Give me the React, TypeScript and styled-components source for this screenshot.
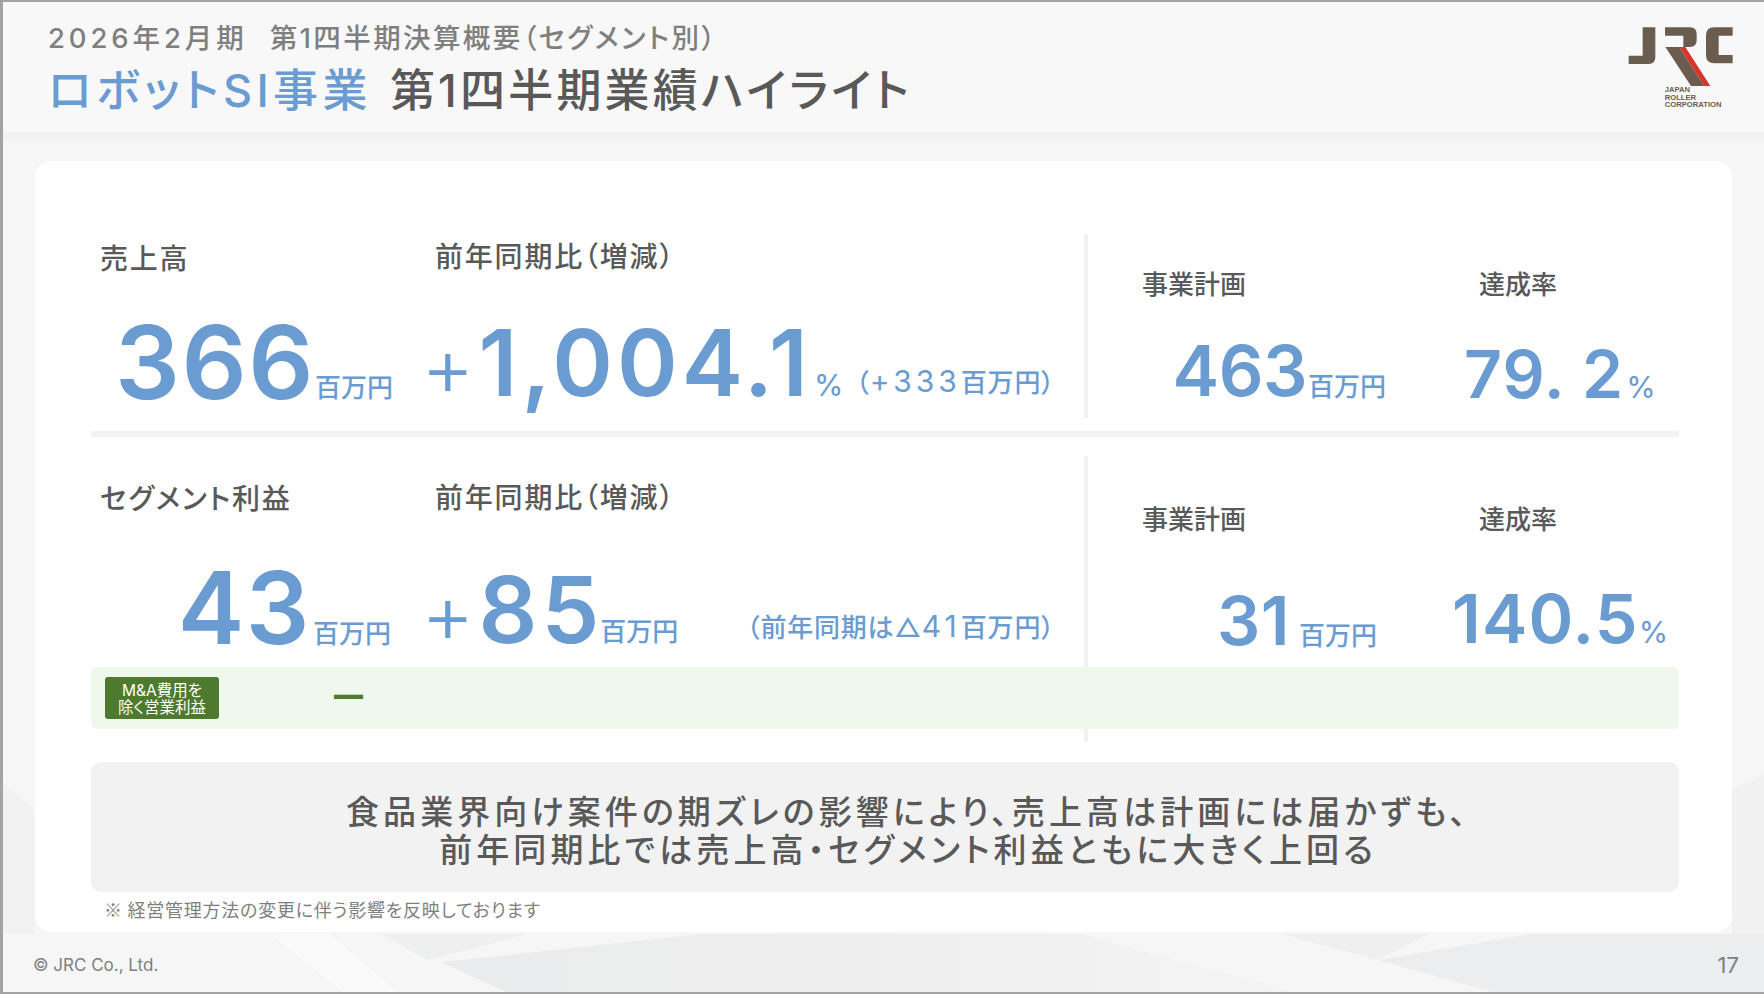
import React from 'react';
import styled, { createGlobalStyle } from 'styled-components';

const BLUE = '#6a9bd1';
const TEXT = '#595959';
const GRAY = '#7f7f7f';
const LINE = '#f2f2f2';
const FONT = 'Inter, "Noto Sans CJK JP", sans-serif';

const GlobalStyle = createGlobalStyle`
    html, body {
        margin: 0;
        padding: 0;
    }
    body {
        font-family: ${FONT};
        font-feature-settings: "palt";
    }
`;

const Page = styled.div`
    position: relative;
    box-sizing: border-box;
    width: 1764px;
    height: 994px;
    overflow: hidden;
    border-top: 2px solid #a3a3a3;
    border-left: 3px solid #a3a3a3;
    border-bottom: 2px solid #a3a3a3;
    display: flex;
    flex-direction: column;
    background-color: #f6f6f6;
`;

// the faint grey shards behind the slide
const Backdrop = styled.svg`
    position: absolute;
    left: -3px;
    top: -2px;
    width: 1764px;
    height: 994px;
`;

const Header = styled.header`
    position: relative;
    box-sizing: border-box;
    height: 138px;
    flex: none;
    padding: 18px 28px 0 45px;
    display: flex;
    justify-content: space-between;
    background: #f8f8f8;
    border-bottom: 8px solid ${LINE};
`;

const TitleBlock = styled.div`
    display: flex;
    flex-direction: column;
`;

const Subtitle = styled.div`
    font-size: 27.5px;
    line-height: 36px;
    font-weight: 500;
    color: ${GRAY};
    display: flex;
    gap: 22px;
    letter-spacing: 2.4px;
`;

const SubtitleYear = styled.span`
    letter-spacing: 3.9px;
`;

const Title = styled.h1`
    margin: 8px 0 0;
    font-size: 45px;
    line-height: 54px;
    font-weight: 500;
    color: ${TEXT};
    display: flex;
    gap: 18px;
    letter-spacing: 3.2px;
`;

const TitleAccent = styled.span`
    color: ${BLUE};
    letter-spacing: 4.4px;
`;

const Logo = styled.svg`
    width: 110px;
    height: 85px;
    margin-top: 5px;
    flex: none;
`;

const Card = styled.main`
    position: relative;
    box-sizing: border-box;
    width: 1697px;
    height: 771px;
    margin: 21px 0 0 32px;
    flex: none;
    padding: 73px 53px 0 56px;
    background: #fff;
    border-radius: 16px;
`;

const MetricGrid = styled.section<{ $rows: string }>`
    display: grid;
    grid-template-columns: 336px 657px 4px 390px 1fr;
    grid-template-rows: ${(p) => p.$rows};
`;

const Divider = styled.div`
    grid-column: 3;
    grid-row: 1 / -1;
    background: ${LINE};
`;

const Cell = styled.div<{ $col: number }>`
    grid-column: ${(p) => p.$col};
    grid-row: 1;
    display: flex;
    flex-direction: column;
    justify-content: space-between;
`;

const Label = styled.div<{ $top: number; $left: number; $small?: boolean }>`
    margin: ${(p) => p.$top}px 0 0 ${(p) => p.$left}px;
    font-size: ${(p) => (p.$small ? 26 : 28)}px;
    letter-spacing: ${(p) => (p.$small ? 0 : 1.8)}px;
    line-height: 36px;
    font-weight: 500;
    color: ${TEXT};
    white-space: nowrap;
`;

const ValueLine = styled.div<{ $bottom: number; $right?: number; $left?: number; $end?: boolean }>`
    display: flex;
    align-items: baseline;
    justify-content: ${(p) => (p.$end ? 'flex-end' : 'flex-start')};
    margin: 0 ${(p) => p.$right ?? 0}px ${(p) => p.$bottom}px ${(p) => p.$left ?? 0}px;
    color: ${BLUE};
    white-space: nowrap;
`;

const Big = styled.span<{ $size: number; $spacing?: number }>`
    font-size: ${(p) => p.$size}px;
    letter-spacing: ${(p) => p.$spacing ?? 0}px;
    line-height: 1;
    font-weight: 600;
`;

const Plus = styled.span`
    font-size: 82px;
    line-height: 1;
    font-weight: 300;
    margin: 0 4px 0 -6px;
`;

const Unit = styled.span<{ $left?: number; $lift?: number }>`
    font-size: 26px;
    line-height: 1;
    font-weight: 500;
    margin-left: ${(p) => p.$left ?? 4}px;
    transform: translateY(${(p) => -(p.$lift ?? 0)}px);
`;

const Percent = styled.span<{ $left?: number }>`
    font-size: 30px;
    line-height: 1;
    font-weight: 400;
    margin-left: ${(p) => p.$left ?? 2}px;
`;

const Aside = styled.span<{ $lift: number }>`
    margin: 0 29px 0 auto;
    font-size: 26px;
    line-height: 1;
    font-weight: 500;
    letter-spacing: 0.8px;
    transform: translateY(${(p) => -p.$lift}px);
`;

const AsideDigits = styled.span`
    font-size: 30px;
    letter-spacing: 4px;
    font-weight: 400;
`;

const RowRule = styled.hr`
    height: 6px;
    margin: 13px 0 19px;
    border: 0;
    background: ${LINE};
`;

const Band = styled.div`
    grid-column: 1 / -1;
    grid-row: 2;
    z-index: 1;
    display: flex;
    align-items: center;
    padding-left: 14px;
    background: #f0f7ec;
    border-radius: 6px;
`;

const Tag = styled.div`
    box-sizing: border-box;
    width: 114px;
    height: 42px;
    padding-top: 2px;
    display: flex;
    align-items: center;
    justify-content: center;
    text-align: center;
    font-size: 15.5px;
    line-height: 17px;
    color: #fff;
    background: #4e7a2f;
    border-radius: 3px;
`;

const Dash = styled.span`
    margin: -8px 0 0 115px;
    font-size: 29px;
    line-height: 1;
    font-weight: 900;
    color: #4e7a2f;
`;

const Summary = styled.div`
    box-sizing: border-box;
    height: 130px;
    margin-top: 20px;
    padding: 31px 0 0 46px;
    text-align: center;
    font-size: 33px;
    line-height: 38px;
    font-weight: 500;
    letter-spacing: 4.1px;
    color: ${TEXT};
    background: ${LINE};
    border-radius: 10px;
`;

const Note = styled.p`
    margin: 5px 0 0 13px;
    font-family: "Noto Sans CJK JP", sans-serif;
    font-size: 18px;
    letter-spacing: 0.75px;
    line-height: 24px;
    color: ${GRAY};
`;

const Footer = styled.footer`
    position: relative;
    flex: 1;
    display: flex;
    justify-content: space-between;
    align-items: center;
    padding: 6px 25px 0 30px;
    color: ${GRAY};
`;

const Copyright = styled.span`
    font-size: 17px;
`;

const PageNumber = styled.span`
    font-size: 22px;
`;

const App = () => (
    <>
        <GlobalStyle />
        <Page>
            <Backdrop viewBox="0 0 1764 994" aria-hidden="true">
                <defs>
                    <linearGradient id="shard" x1="0" x2="1" y1="0" y2="0">
                        <stop offset="0" stopColor="#eaebec" />
                        <stop offset="0.55" stopColor="#efefef" />
                        <stop offset="1" stopColor="#f4f4f4" />
                    </linearGradient>
                </defs>
                <polygon fill="#fafafa" points="270,934 330,934 400,994 345,994" />
                <polygon fill="#eeefef" points="382,934 528,934 427,960" />
                <polygon fill="url(#shard)" points="441,962 703,934 1080,934 1300,994 510,994" />
                <polygon fill="#efefef" points="1282,934 1428,934 1378,960" />
                <polygon fill="#ecedee" points="1378,960 1530,934 1764,934 1764,994 1500,994" />
                <polygon fill="#f1f1f1" points="1732,790 1764,775 1764,934 1732,934" />
                <polygon fill="#f2f2f2" points="0,780 35,810 35,934 0,934" />
            </Backdrop>
            <Header>
                <TitleBlock>
                    <Subtitle>
                        <SubtitleYear>2026年2月期</SubtitleYear>
                        <span>第1四半期決算概要（セグメント別）</span>
                    </Subtitle>
                    <Title>
                        <TitleAccent>ロボットSI事業</TitleAccent>
                        <span>第1四半期業績ハイライト</span>
                    </Title>
                </TitleBlock>
                <Logo viewBox="140 75 330 255" role="img" aria-label="JRC">
                    <path fill="#6a5d50" d="M190 82H228V172Q228 192 208 192H148V167H190Z" />
                    <path fill="#6a5d50" d="M257 82H332Q352 82 352 102V121Q352 141 332 141H312V107H257Z" />
                    <path fill="#6a5d50" d="M258 141H300L375 258H335Z" />
                    <path fill="#d9342b" d="M300 141H318L393 258H375Z" />
                    <path fill="#6a5d50" d="M460 82H405Q380 82 380 107V165Q380 190 405 190H460V165H418V107H460Z" />
                    <g fill="#6a5d50" fontFamily="'Liberation Sans', sans-serif" fontSize="23" fontWeight="700">
                        <text x="256" y="277">JAPAN</text>
                        <text x="256" y="300">ROLLER</text>
                        <text x="256" y="322">CORPORATION</text>
                    </g>
                </Logo>
            </Header>

            <Card>
                <MetricGrid $rows="184px">
                    <Cell $col={1}>
                        <Label $top={7} $left={9}>売上高</Label>
                        <ValueLine $bottom={5} $right={34} $end>
                            <Big $size={102} $spacing={1.5}>366</Big>
                            <Unit $left={0} $lift={2}>百万円</Unit>
                        </ValueLine>
                    </Cell>
                    <Cell $col={2}>
                        <Label $top={5} $left={8}>前年同期比（増減）</Label>
                        <ValueLine $bottom={9}>
                            <Plus>+</Plus>
                            <Big $size={92} $spacing={4}>1,004.1</Big>
                            <Percent>%</Percent>
                            <Aside $lift={4}>（<AsideDigits>+333</AsideDigits>百万円）</Aside>
                        </ValueLine>
                    </Cell>
                    <Divider />
                    <Cell $col={4}>
                        <Label $top={33} $left={54} $small>事業計画</Label>
                        <ValueLine $bottom={12} $right={92} $end>
                            <Big $size={70} $spacing={-0.5}>463</Big>
                            <Unit $left={1}>百万円</Unit>
                        </ValueLine>
                    </Cell>
                    <Cell $col={5}>
                        <Label $top={33} $left={1} $small>達成率</Label>
                        <ValueLine $bottom={11} $left={-14}>
                            <Big $size={66} $spacing={1}>79. 2</Big>
                            <Percent>%</Percent>
                        </ValueLine>
                    </Cell>
                </MetricGrid>

                <RowRule />

                <MetricGrid $rows="211px 62px 13px">
                    <Cell $col={1}>
                        <Label $top={25} $left={9}>セグメント利益</Label>
                        <ValueLine $bottom={9} $right={36} $end>
                            <Big $size={100} $spacing={1.5}>43</Big>
                            <Unit $left={2} $lift={1}>百万円</Unit>
                        </ValueLine>
                    </Cell>
                    <Cell $col={2}>
                        <Label $top={24} $left={8}>前年同期比（増減）</Label>
                        <ValueLine $bottom={11}>
                            <Plus>+</Plus>
                            <Big $size={92} $spacing={4}>85</Big>
                            <Unit $left={-3} $lift={2}>百万円</Unit>
                            <Aside $lift={6}>（前年同期は△<AsideDigits>41</AsideDigits>百万円）</Aside>
                        </ValueLine>
                    </Cell>
                    <Divider />
                    <Cell $col={4}>
                        <Label $top={46} $left={54} $small>事業計画</Label>
                        <ValueLine $bottom={13} $right={101} $end>
                            <Big $size={68} $spacing={0.5}>31</Big>
                            <Unit $left={9}>百万円</Unit>
                        </ValueLine>
                    </Cell>
                    <Cell $col={5}>
                        <Label $top={46} $left={1} $small>達成率</Label>
                        <ValueLine $bottom={15} $left={-26}>
                            <Big $size={68} $spacing={1.2}>140.5</Big>
                            <Percent $left={0}>%</Percent>
                        </ValueLine>
                    </Cell>
                    <Band>
                        <Tag>M&amp;A費用を<br />除く営業利益</Tag>
                        <Dash>—</Dash>
                    </Band>
                </MetricGrid>

                <Summary>
                    食品業界向け案件の期ズレの影響により、売上高は計画には届かずも、<br />
                    前年同期比では売上高・セグメント利益ともに大きく上回る
                </Summary>
                <Note>※ 経営管理方法の変更に伴う影響を反映しております</Note>
            </Card>

            <Footer>
                <Copyright>© JRC Co., Ltd.</Copyright>
                <PageNumber>17</PageNumber>
            </Footer>
        </Page>
    </>
);

export default App;
